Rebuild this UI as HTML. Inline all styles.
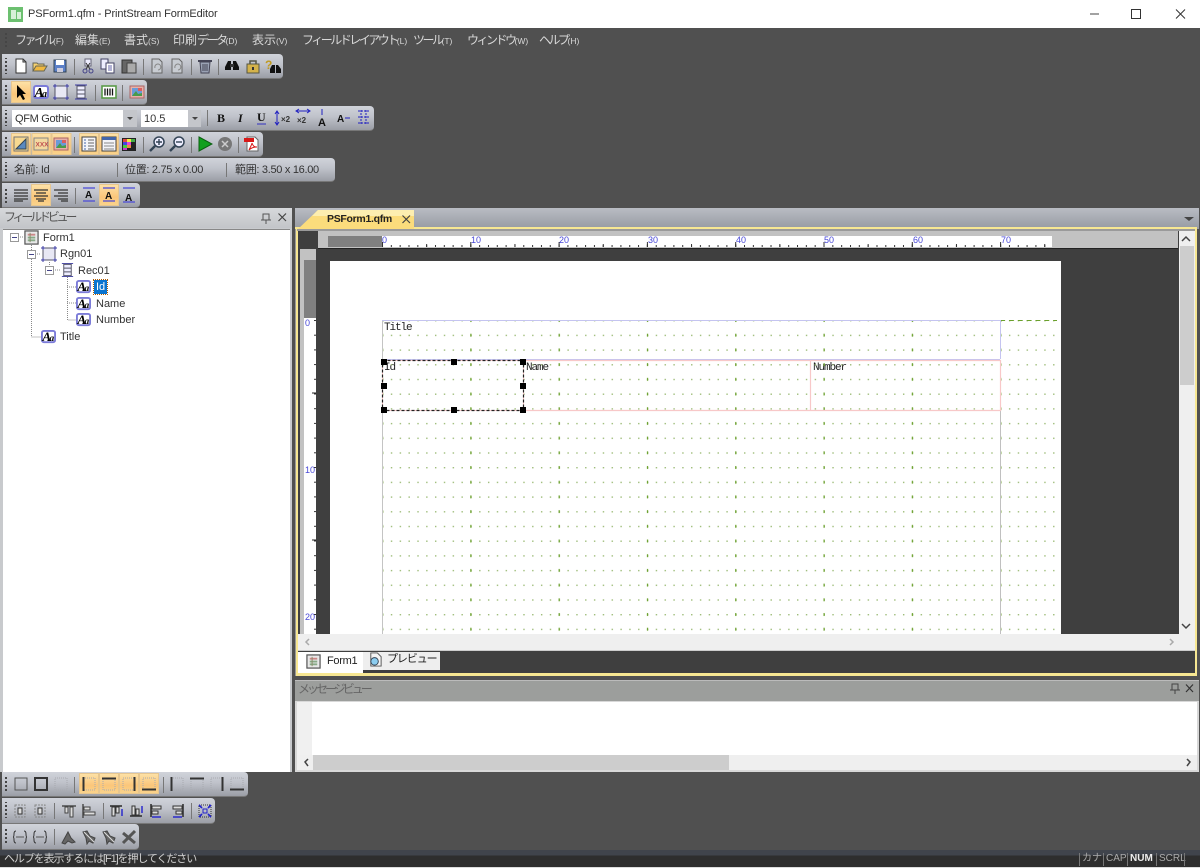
<!DOCTYPE html>
<html><head><meta charset="utf-8"><title>PrintStream FormEditor</title>
<style>
html,body{margin:0;padding:0;background:#4f4f4f}
#r{position:relative;width:1200px;height:868px;overflow:hidden;background:#505050;font:11px "Liberation Sans","Noto Sans CJK JP",sans-serif;color:#222;filter:blur(.3px)}
#r div{position:absolute;white-space:nowrap}
.tb{left:2px;background:linear-gradient(#d0d3da 0,#bfc2ca 45%,#9b9ea6 100%);border-radius:0 4px 4px 0;border-bottom:1px solid #777}
.m{top:33px;font-size:12px;color:#d9d9d9;line-height:15px}
.m small{font-size:8.5px}
.m b{font-weight:normal;letter-spacing:-2.5px}
.tr{font-size:11px;color:#333;line-height:14px}
.mono{font-family:"Liberation Mono","Noto Sans CJK JP",monospace;font-size:11px;letter-spacing:-1.1px;color:#222;line-height:12px}
.s5{font-size:11px;line-height:15px;color:#333;letter-spacing:-.3px;top:163px}
svg{position:absolute;left:0;top:0}
.st{top:852px;font-size:10px;line-height:14px;color:#aaa}
.rn{font-size:9px;line-height:11px;color:#4848d8}
</style></head><body><div id="r">
<!-- title bar -->
<div style="left:0;top:0;width:1200px;height:28px;background:#fff"></div>
<div style="left:28px;top:7px;font-size:11px;line-height:15px;color:#333;letter-spacing:-.1px">PSForm1.qfm - PrintStream FormEditor</div>
<!-- menu -->
<div class="m" style="left:15px"><b>ファイル</b><small>(F)</small></div>
<div class="m" style="left:75px">編集<small>(E)</small></div>
<div class="m" style="left:124px">書式<small>(S)</small></div>
<div class="m" style="left:173px">印刷<b>データ</b><small>(D)</small></div>
<div class="m" style="left:252px">表示<small>(V)</small></div>
<div class="m" style="left:302px"><b>フィールドレイアウト</b><small>(L)</small></div>
<div class="m" style="left:413px"><b>ツール</b><small>(T)</small></div>
<div class="m" style="left:467px"><b>ウィンドウ</b><small>(W)</small></div>
<div class="m" style="left:539px"><b>ヘルプ</b><small>(H)</small></div>
<!-- toolbars -->
<div class="tb" style="top:54px;width:281px;height:24px"></div>
<div class="tb" style="top:80px;width:145px;height:24px"></div>
<div class="tb" style="top:106px;width:372px;height:24px"></div>
<div class="tb" style="top:132px;width:261px;height:24px"></div>
<div class="tb" style="top:158px;width:333px;height:23px"></div>
<div class="tb" style="top:183px;width:138px;height:24px"></div>
<div class="tb" style="top:772px;width:246px;height:24px"></div>
<div class="tb" style="top:798px;width:213px;height:25px"></div>
<div class="tb" style="top:824px;width:137px;height:25px"></div>
<!-- combos -->
<div style="left:12px;top:110px;width:125px;height:17px;background:#fff"></div>
<div style="left:123px;top:110px;width:14px;height:17px;background:#c4c6cb"></div>
<div style="left:15px;top:112px;font-size:11px;line-height:14px;color:#333;letter-spacing:-.3px">QFM Gothic</div>
<div style="left:141px;top:110px;width:60px;height:17px;background:#fff"></div>
<div style="left:188px;top:110px;width:13px;height:17px;background:#c4c6cb"></div>
<div style="left:144px;top:112px;font-size:11px;line-height:14px;color:#333">10.5</div>
<!-- status tb text -->
<div class="s5" style="left:14px">名前: Id</div>
<div class="s5" style="left:125px">位置: 2.75 x 0.00</div>
<div class="s5" style="left:235px">範囲: 3.50 x 16.00</div>
<!-- field view -->
<div style="left:0;top:208px;width:292px;height:564px;background:#c8cacd"></div>
<div style="left:0;top:208px;width:292px;height:20px;background:linear-gradient(#d6d8db,#c2c4c8)"></div>
<div style="left:4px;top:210px;font-size:12px;line-height:15px;color:#555;letter-spacing:-3.2px">フィールドビュー</div>
<div style="left:3px;top:229px;width:287px;height:542px;background:#fff;border-top:1px solid #888"></div>
<div class="tr" style="left:43px;top:231px">Form1</div>
<div class="tr" style="left:60px;top:247px">Rgn01</div>
<div class="tr" style="left:78px;top:264px">Rec01</div>
<div style="left:94px;top:280px;width:13px;height:14px;background:#0a74d0;outline:1px dotted #b05a00"></div>
<div class="tr" style="left:96px;top:280px;color:#fff">Id</div>
<div class="tr" style="left:96px;top:297px">Name</div>
<div class="tr" style="left:96px;top:313px">Number</div>
<div class="tr" style="left:60px;top:330px">Title</div>
<!-- document area -->
<div style="left:295px;top:208px;width:904px;height:21px;background:linear-gradient(#b9bcc3,#969aa2)"></div>
<div style="left:295px;top:227px;width:902px;height:449px;background:#f7e792"></div>
<div style="left:295px;top:229px;width:1px;height:447px;background:#999"></div>
<div style="left:297px;top:229px;width:898px;height:2px;background:#9a9a9a"></div>
<div style="left:298px;top:231px;width:897px;height:403px;background:#3f3f3f"></div>
<div style="left:318px;top:231px;width:860px;height:17px;background:#c2c2c2"></div>
<div style="left:328px;top:236px;width:54px;height:11px;background:#808080"></div>
<div style="left:382px;top:236px;width:670px;height:11px;background:#fff"></div>
<div style="left:300px;top:249px;width:16px;height:385px;background:#c2c2c2"></div>
<div style="left:304px;top:260px;width:12px;height:58px;background:#808080"></div>
<div style="left:304px;top:318px;width:12px;height:316px;background:#fff"></div>
<div style="left:1179px;top:231px;width:16px;height:403px;background:#efefef"></div>
<div style="left:1180px;top:246px;width:14px;height:139px;background:#cdcdcd"></div>
<div style="left:330px;top:261px;width:731px;height:373px;background:#fff"></div>
<div style="left:298px;top:634px;width:897px;height:17px;background:#efefef;border-bottom:1px solid #ccc;box-sizing:border-box"></div>
<div style="left:298px;top:651px;width:897px;height:22px;background:#3f3f3f"></div>
<div style="left:298px;top:652px;width:65px;height:21px;background:#fff"></div>
<div style="left:363px;top:652px;width:77px;height:18px;background:#eee"></div>
<div style="left:327px;top:654px;font-size:11px;line-height:14px;color:#222;letter-spacing:-.3px">Form1</div>
<div style="left:387px;top:652px;font-size:11px;line-height:14px;color:#222;letter-spacing:-1.1px">プレビュー</div>
<!-- tab -->
<svg width="1200" height="868" viewBox="0 0 1200 868"><path d="M298 229L318 210H414V229Z" fill="#fbdc7c"/><path d="M318 210H414V216H312Z" fill="#fdeeb0"/></svg>
<div style="left:327px;top:212px;font-size:10.5px;font-weight:bold;line-height:14px;color:#222;letter-spacing:-.3px">PSForm1.qfm</div>
<!-- ruler numbers -->
<div class="rn" style="left:382px;top:235px">0</div>
<div class="rn" style="left:471px;top:235px">10</div>
<div class="rn" style="left:559px;top:235px">20</div>
<div class="rn" style="left:648px;top:235px">30</div>
<div class="rn" style="left:736px;top:235px">40</div>
<div class="rn" style="left:824px;top:235px">50</div>
<div class="rn" style="left:913px;top:235px">60</div>
<div class="rn" style="left:1001px;top:235px">70</div>
<div class="rn" style="left:305px;top:318px">0</div>
<div class="rn" style="left:305px;top:465px">10</div>
<div class="rn" style="left:305px;top:612px">20</div>
<!-- message view -->
<div style="left:295px;top:700px;width:904px;height:72px;background:#d8d8d8"></div>
<div style="left:295px;top:680px;width:904px;height:21px;background:#9c9e9c;border-top:1px solid #bbb;box-sizing:border-box"></div>
<div style="left:298px;top:682px;font-size:12px;line-height:15px;color:#666;letter-spacing:-3px">メッセージビュー</div>
<div style="left:297px;top:702px;width:900px;height:53px;background:#fff"></div>
<div style="left:297px;top:702px;width:15px;height:53px;background:#f0f0f0"></div>
<div style="left:297px;top:755px;width:900px;height:15px;background:#efefef"></div>
<div style="left:313px;top:755px;width:416px;height:15px;background:#cdcdcd"></div>
<!-- status bar -->
<div style="left:0;top:850px;width:1200px;height:17px;background:linear-gradient(#40444c 0,#40444c 5px,#2e2e2e 6px)"></div>
<div style="left:0;top:867px;width:1200px;height:1px;background:#ddd"></div>
<div style="left:4px;top:852px;font-size:11px;line-height:14px;color:#d0d0d0;letter-spacing:-1.1px">ヘルプを表示するには[F1]を押してください</div>
<div class="st" style="left:1082px">カナ</div>
<div class="st" style="left:1106px">CAP</div>
<div class="st" style="left:1130px;color:#eee;font-weight:bold">NUM</div>
<div class="st" style="left:1159px">SCRL</div>
<!-- page overlay text -->
<div class="mono" style="left:384px;top:322px">Title</div>
<div class="mono" style="left:384px;top:362px">Id</div>
<div class="mono" style="left:526px;top:362px">Name</div>
<div class="mono" style="left:813px;top:362px">Number</div>

<svg width="1200" height="868" viewBox="0 0 1200 868" fill="none">
<defs>
<linearGradient id="hl" x1="0" y1="0" x2="0" y2="1"><stop offset="0" stop-color="#fde2a8"/><stop offset=".6" stop-color="#fbc67a"/><stop offset="1" stop-color="#fad48c"/></linearGradient>
<pattern id="grip" x="0" y="0" width="4" height="4" patternUnits="userSpaceOnUse"><rect x="1" y="1" width="2" height="2" fill="#444"/></pattern>
<pattern id="dots" x="382" y="320" width="8.83" height="14.7" patternUnits="userSpaceOnUse"><rect x="0" y="0" width="1.4" height="1.4" fill="#9dbc78"/></pattern>
<pattern id="tick" x="382" y="240" width="8.83" height="9" patternUnits="userSpaceOnUse"><rect x="0" y="5" width="1" height="2" fill="#333"/></pattern>
<pattern id="tick10" x="382" y="240" width="88.3" height="9" patternUnits="userSpaceOnUse"><rect x="0" y="2" width="1" height="5" fill="#333"/></pattern>
<pattern id="tick5" x="382" y="240" width="44.15" height="9" patternUnits="userSpaceOnUse"><rect x="0" y="4" width="1" height="3" fill="#333"/></pattern>
<pattern id="vtick" x="310" y="320" width="9" height="14.7" patternUnits="userSpaceOnUse"><rect x="4" y="0" width="2" height="1" fill="#333"/></pattern>
<pattern id="maj" x="382" y="320" width="88.3" height="14.7" patternUnits="userSpaceOnUse"><rect x="0" y="0" width="1.2" height="2" fill="#6aa02c"/><rect x="0" y="13.700" width="1.2" height="1" fill="#6aa02c"/></pattern>
<pattern id="hd" x="382" y="0" width="8.83" height="10" patternUnits="userSpaceOnUse"><rect x="0" y="0" width="5" height="1" fill="#6aa02c"/></pattern>

<symbol id="new" viewBox="0 0 16 16"><path d="M3 1H10L13 4V15H3Z" fill="#fff" stroke="#333"/><path d="M10 1V4H13" stroke="#333"/></symbol>
<symbol id="open" viewBox="0 0 16 16"><path d="M1 13V5H5L6 6H12V8" fill="#f4d070" stroke="#665"/><path d="M1 13L4 8H15L12 13Z" fill="#f0b840" stroke="#665"/></symbol>
<symbol id="save" viewBox="0 0 16 16"><rect x="2" y="2" width="12" height="12" fill="#5a7fc8" stroke="#345"/><rect x="4" y="2" width="8" height="5" fill="#fff"/><rect x="5" y="10" width="6" height="4" fill="#ccd"/></symbol>
<symbol id="cut" viewBox="0 0 16 16"><path d="M5 1H11V8H5Z" fill="#eef" stroke="#667"/><circle cx="5" cy="13" r="2" stroke="#448"/><circle cx="11" cy="13" r="2" stroke="#448"/><path d="M6 11L10 5M10 11L6 5" stroke="#333"/></symbol>
<symbol id="copy" viewBox="0 0 16 16"><path d="M1 1H8V11H1Z" fill="#eef" stroke="#446"/><path d="M6 5H14V15H6Z" fill="#fff" stroke="#446"/><path d="M8 8H12M8 10H12M8 12H12" stroke="#66a"/></symbol>
<symbol id="paste" viewBox="0 0 16 16"><rect x="1" y="2" width="10" height="13" fill="#666" stroke="#333"/><rect x="6" y="5" width="9" height="10" fill="#aaa" stroke="#444"/></symbol>
<symbol id="undo" viewBox="0 0 16 16"><path d="M3 1H10L13 4V15H3Z" fill="#c8ccd2" stroke="#666"/><path d="M6 10A3 3 0 1 1 9 12" stroke="#888"/></symbol>
<symbol id="trash" viewBox="0 0 16 16"><path d="M1 3H15" stroke="#445" stroke-width="2"/><path d="M3 4L4 15H12L13 4Z" fill="#9aa2b4" stroke="#445"/><path d="M6 6V13M8 6V13M10 6V13" stroke="#445"/></symbol>
<symbol id="bino" viewBox="0 0 16 16"><path d="M4 3H7V12H1V9ZM9 3H12L15 9V12H9Z" fill="#111"/><rect x="6" y="6" width="4" height="3" fill="#333"/></symbol>
<symbol id="lock" viewBox="0 0 16 16"><rect x="2" y="6" width="12" height="9" fill="#d4b24a" stroke="#554"/><path d="M5 6V3H11V6" stroke="#554" stroke-width="1.5"/><rect x="7" y="9" width="2" height="3" fill="#333"/></symbol>
<symbol id="find" viewBox="0 0 16 16"><text x="0" y="11" font-size="12" font-weight="bold" fill="#c09a20" font-family="Liberation Sans">?</text><path d="M7 7H10V15H5V11ZM11 7H13L16 11V15H11Z" fill="#111"/></symbol>
<symbol id="arrow" viewBox="0 0 16 16"><path d="M4 1V14L7 11L10 16L12 15L9.5 10H13Z" fill="#000"/></symbol>
<symbol id="aa" viewBox="0 0 16 16"><rect x="1" y="2" width="14" height="12" rx="2" fill="#fff" stroke="#7b7bd8" stroke-width="2"/><text x="1.500" y="13" font-size="14" font-style="italic" font-weight="bold" fill="#000" font-family="Liberation Serif">A</text><text x="9" y="13" font-size="10" font-style="italic" font-weight="bold" fill="#000" font-family="Liberation Serif">a</text></symbol>
<symbol id="rgn" viewBox="0 0 16 16"><rect x="2" y="2" width="12" height="12" fill="#e8e8f4" stroke="#556"/><path d="M0 2H4M12 2H16M0 14H4M12 14H16M2 0V4M14 0V4M2 12V16M14 12V16" stroke="#3a3aa0"/></symbol>
<symbol id="rec" viewBox="0 0 16 16"><path d="M2 1H14M2 15H14" stroke="#3a3aa0"/><rect x="4" y="2" width="8" height="12" fill="#eef" stroke="#556"/><path d="M4 6H12M4 10H12" stroke="#556"/></symbol>
<symbol id="bar" viewBox="0 0 16 16"><rect x="1" y="2" width="14" height="12" fill="#fff" stroke="#5a9a4a" stroke-width="1.6"/><path d="M4 4.500V11.500M6.500 4.500V11.500M9 4.500V11.500M11.500 4.500V11.500" stroke="#111" stroke-width="1.3"/></symbol>
<symbol id="xxx" viewBox="0 0 16 16"><rect x="1" y="2" width="14" height="12" fill="#f2d8a0" stroke="#888"/><text x="2.500" y="10.500" font-size="6.500" font-weight="bold" fill="#c05050" font-family="Liberation Sans">XXX</text></symbol>
<symbol id="pic" viewBox="0 0 16 16"><rect x="1" y="2" width="14" height="12" fill="#e8b0a8" stroke="#a66"/><rect x="3" y="4" width="10" height="8" fill="#6a9ad8"/><path d="M3 12L7 7L9 10L13 9V12Z" fill="#4a9a4a"/><rect x="9" y="4" width="4" height="3" fill="#d86060"/></symbol>
<symbol id="ch" viewBox="0 0 16 16"><rect x="1" y="1" width="14" height="14" fill="#f6d890" stroke="#777"/><path d="M3 13L13 3V13Z" fill="#5a8ac0" stroke="#345"/></symbol>
<symbol id="form" viewBox="0 0 16 16"><rect x="1" y="1" width="14" height="14" fill="#f4f4f8" stroke="#444"/><path d="M3 4H5M3 7H5M3 10H5M3 13H5" stroke="#46a"/><path d="M7 4H13M7 7H13M7 10H13M7 13H13" stroke="#666"/></symbol>
<symbol id="form2" viewBox="0 0 16 16"><rect x="1" y="1" width="14" height="14" fill="#f4f4f8" stroke="#444"/><rect x="1" y="1" width="14" height="3" fill="#46a"/><path d="M3 7H13M3 10H13M3 13H13" stroke="#888"/></symbol>
<symbol id="colors" viewBox="0 0 16 16"><rect x="1" y="2" width="14" height="13" fill="#222"/><rect x="2" y="3" width="4" height="3" fill="#d44"/><rect x="6" y="3" width="4" height="3" fill="#ee4"/><rect x="10" y="3" width="4" height="3" fill="#4a4"/><rect x="2" y="6" width="4" height="3" fill="#44d"/><rect x="6" y="6" width="4" height="3" fill="#d4d"/><rect x="2" y="9" width="4" height="3" fill="#4c4"/><rect x="6" y="9" width="4" height="3" fill="#e84"/><rect x="2" y="12" width="4" height="2" fill="#c3c"/></symbol>
<symbol id="zi" viewBox="0 0 16 16"><circle cx="10" cy="6" r="5" fill="#eef" stroke="#345" stroke-width="1.5"/><path d="M7 6H13M10 3V9" stroke="#345" stroke-width="1.4"/><path d="M6 10L1 15" stroke="#345" stroke-width="2.4"/></symbol>
<symbol id="zo" viewBox="0 0 16 16"><circle cx="10" cy="6" r="5" fill="#eef" stroke="#345" stroke-width="1.5"/><path d="M7 6H13" stroke="#345" stroke-width="1.4"/><path d="M6 10L1 15" stroke="#345" stroke-width="2.4"/></symbol>
<symbol id="play" viewBox="0 0 16 16"><path d="M2 1L15 8L2 15Z" fill="#12a01e" stroke="#0a6010"/></symbol>
<symbol id="stop" viewBox="0 0 16 16"><circle cx="8" cy="8" r="7" fill="#777"/><path d="M5 5L11 11M11 5L5 11" stroke="#ccc" stroke-width="1.5"/></symbol>
<symbol id="pdf" viewBox="0 0 16 16"><path d="M3 1H11L14 4V15H3Z" fill="#fff" stroke="#666"/><rect x="0" y="2" width="10" height="4" fill="#d81818"/><path d="M5 14C7 10 8 8 8 7C9 10 10 11 13 11C10 11 7 12 5 14Z" stroke="#d81818"/></symbol>
<symbol id="al" viewBox="0 0 16 16"><path d="M1 3H15M1 6H15M1 9H15M1 12H15M1 14H10" stroke="#333" stroke-width="1.2"/></symbol>
<symbol id="ac" viewBox="0 0 16 16"><path d="M1 3H15M3 6H13M1 9H15M3 12H13M5 14H11" stroke="#333" stroke-width="1.2"/></symbol>
<symbol id="ar" viewBox="0 0 16 16"><path d="M1 3H15M5 6H15M1 9H15M5 12H15M8 14H15" stroke="#333" stroke-width="1.2"/></symbol>
<symbol id="atop" viewBox="0 0 16 16"><path d="M2 1H14M2 14H14" stroke="#4a4ad8" stroke-width="1.3"/><text x="4" y="11" font-size="10" font-weight="bold" fill="#111" font-family="Liberation Sans">A</text></symbol>
<symbol id="amid" viewBox="0 0 16 16"><path d="M2 1H14M2 14H14" stroke="#4a4ad8" stroke-width="1.3"/><text x="4" y="12" font-size="10" font-weight="bold" fill="#111" font-family="Liberation Sans">A</text></symbol>
<symbol id="abot" viewBox="0 0 16 16"><path d="M2 1H14M2 15H14" stroke="#4a4ad8" stroke-width="1.3"/><text x="4" y="14" font-size="10" font-weight="bold" fill="#111" font-family="Liberation Sans">A</text></symbol>
<symbol id="fa" viewBox="0 0 16 16"><rect x="1" y="1" width="14" height="14" fill="#e8e8e8" stroke="#555" stroke-width="1.3"/><path d="M4 5H12" stroke="#c88" stroke-width="2"/><path d="M4 8H12M4 11H12" stroke="#8a8" stroke-width="2"/><path d="M6.500 3V13" stroke="#886"/></symbol>
<symbol id="prev" viewBox="0 0 16 16"><path d="M3 1H10L14 5V15H3Z" fill="#f4f4f4" stroke="#555"/><circle cx="7" cy="10" r="4" fill="#8ccdf0" stroke="#345"/></symbol>
<symbol id="bd" viewBox="0 0 16 16"><rect x="2" y="2" width="12" height="12" stroke="#555" stroke-width="1"/></symbol>
<symbol id="bd2" viewBox="0 0 16 16"><rect x="2" y="2" width="12" height="12" stroke="#333" stroke-width="2"/></symbol>
<symbol id="bd0" viewBox="0 0 16 16"><rect x="2" y="2" width="12" height="12" stroke="#a8aab0" stroke-dasharray="1 1"/></symbol>
<symbol id="bl" viewBox="0 0 16 16"><rect x="2" y="2" width="12" height="12" stroke="#a8aab0" stroke-dasharray="1 1"/><path d="M2.500 1V15" stroke="#333" stroke-width="2"/></symbol>
<symbol id="bt" viewBox="0 0 16 16"><rect x="2" y="2" width="12" height="12" stroke="#a8aab0" stroke-dasharray="1 1"/><path d="M1 2.500H15" stroke="#333" stroke-width="2"/></symbol>
<symbol id="br" viewBox="0 0 16 16"><rect x="2" y="2" width="12" height="12" stroke="#a8aab0" stroke-dasharray="1 1"/><path d="M13.500 1V15" stroke="#333" stroke-width="2"/></symbol>
<symbol id="bb" viewBox="0 0 16 16"><rect x="2" y="2" width="12" height="12" stroke="#a8aab0" stroke-dasharray="1 1"/><path d="M1 13.500H15" stroke="#333" stroke-width="2"/></symbol>
<symbol id="g1" viewBox="0 0 16 16"><rect x="3" y="2" width="10" height="12" stroke="#888" stroke-dasharray="2 1"/><rect x="6" y="5" width="4" height="6" fill="#ddd" stroke="#333"/></symbol>
<symbol id="g2" viewBox="0 0 16 16"><path d="M1 3H15" stroke="#444" stroke-width="1.4"/><rect x="4" y="4" width="3" height="6" fill="#ddd" stroke="#444"/><rect x="9" y="4" width="3" height="10" fill="#ddd" stroke="#444"/></symbol>
<symbol id="g3" viewBox="0 0 16 16"><path d="M2 1V15" stroke="#444" stroke-width="1.4"/><rect x="3" y="4" width="6" height="3" fill="#ddd" stroke="#444"/><rect x="3" y="9" width="11" height="3" fill="#ddd" stroke="#444"/></symbol>
<symbol id="g4" viewBox="0 0 16 16"><path d="M1 3H13" stroke="#333" stroke-width="1.6"/><rect x="3" y="4" width="3" height="9" fill="#ddd" stroke="#333"/><rect x="7" y="4" width="3" height="6" fill="#ddd" stroke="#333"/><path d="M13 13V6" stroke="#22c" stroke-width="1.4"/></symbol>
<symbol id="g5" viewBox="0 0 16 16"><path d="M1 13H13" stroke="#333" stroke-width="1.6"/><rect x="3" y="3" width="3" height="9" fill="#ddd" stroke="#333"/><rect x="7" y="6" width="3" height="6" fill="#ddd" stroke="#333"/><path d="M13 3V10" stroke="#22c" stroke-width="1.4"/></symbol>
<symbol id="g6" viewBox="0 0 16 16"><path d="M2 1V14" stroke="#333" stroke-width="1.6"/><rect x="3" y="3" width="9" height="3" fill="#ddd" stroke="#333"/><rect x="3" y="8" width="6" height="3" fill="#ddd" stroke="#333"/><path d="M3 14H12" stroke="#22c" stroke-width="1.4"/></symbol>
<symbol id="g7" viewBox="0 0 16 16"><path d="M14 1V14" stroke="#333" stroke-width="1.6"/><rect x="4" y="3" width="9" height="3" fill="#ddd" stroke="#333"/><rect x="7" y="8" width="6" height="3" fill="#ddd" stroke="#333"/><path d="M4 14H13" stroke="#22c" stroke-width="1.4"/></symbol>
<symbol id="g8" viewBox="0 0 16 16"><rect x="2" y="2" width="12" height="12" stroke="#333" stroke-dasharray="1 1"/><rect x="6" y="6" width="4" height="4" stroke="#22c"/><path d="M2 2L5 5M14 2L11 5M2 14L5 11M14 14L11 11" stroke="#22c" stroke-width="1.6"/></symbol>
<symbol id="h1" viewBox="0 0 16 16"><path d="M4 2Q2 2 2 5T1 8Q2 8 2 11T4 14M12 2Q14 2 14 5T15 8Q14 8 14 11T12 14" stroke="#333"/><path d="M4 8H12" stroke="#555"/></symbol>
<symbol id="k1" viewBox="0 0 16 16"><path d="M1 14L7 3L10 9L14 13L11 14L7 12L4 15Z" fill="#666" stroke="#444"/></symbol>
<symbol id="k2" viewBox="0 0 16 16"><path d="M2 3L6 2L9 7L14 9L12 14L8 12L6 15L5 9Z" fill="#666" stroke="#444"/><path d="M3 3L13 13" stroke="#ddd"/></symbol>
<symbol id="k3" viewBox="0 0 16 16"><path d="M2 4L14 14M14 2L2 14" stroke="#555" stroke-width="3"/></symbol>
</defs>

<!-- window controls -->
<path d="M1090 14H1099" stroke="#444"/><rect x="1131.500" y="9.500" width="9" height="9" stroke="#333"/><path d="M1176 9.500L1185 18.500M1185 9.500L1176 18.500" stroke="#333"/>
<!-- app icon -->
<rect x="8" y="7" width="15" height="15" fill="#6cc070"/><rect x="11" y="10" width="5" height="9" fill="#d8f0d8"/><rect x="17" y="12" width="4" height="7" fill="#d8f0d8"/>
<!-- grips -->
<rect x="4" y="32" width="4" height="17" fill="url(#grip)" opacity=".9"/>
<rect x="4" y="58" width="4" height="16" fill="url(#grip)"/><rect x="4" y="84" width="4" height="16" fill="url(#grip)"/><rect x="4" y="110" width="4" height="16" fill="url(#grip)"/><rect x="4" y="136" width="4" height="16" fill="url(#grip)"/><rect x="4" y="162" width="4" height="16" fill="url(#grip)"/><rect x="4" y="187" width="4" height="16" fill="url(#grip)"/><rect x="4" y="776" width="4" height="16" fill="url(#grip)"/><rect x="4" y="802" width="4" height="16" fill="url(#grip)"/><rect x="4" y="828" width="4" height="16" fill="url(#grip)"/>
<!-- separators -->
<g stroke="#777"><path d="M74.500 59V75M143.500 59V75M191.500 59V75M218.500 59V75M95.500 85V101M122.500 85V101M207.500 110V126M74.500 137V153M143.500 137V153M191.500 137V153M238.500 137V153M117.500 163V177M226.500 163V177M75.500 188V204M74.500 777V793M163.500 777V793M54.500 803V819M103.500 803V819M191.500 803V819M54.500 829V845"/></g>
<!-- highlights -->
<g fill="url(#hl)" stroke="#e6c690">
<rect x="11.500" y="81.500" width="19" height="21"/>
<rect x="11.500" y="133.500" width="19" height="21"/><rect x="32" y="133.500" width="19" height="21"/><rect x="52" y="133.500" width="19" height="21"/>
<rect x="79.500" y="133.500" width="19" height="21"/><rect x="99.500" y="133.500" width="19" height="21"/>
<rect x="31.500" y="184.500" width="19" height="21"/><rect x="99.500" y="184.500" width="19" height="21"/>
<rect x="79.500" y="773.500" width="19" height="20"/><rect x="99.500" y="773.500" width="19" height="20"/><rect x="119.500" y="773.500" width="19" height="20"/><rect x="139.500" y="773.500" width="19" height="20"/>
</g>
<!-- combo arrows -->
<path d="M127 117H133L130 120ZM192 117H198L195 120Z" fill="#444"/>
<!-- tb1 -->
<use href="#new" x="13" y="58" width="16" height="16"/><use href="#open" x="32" y="58" width="16" height="16"/><use href="#save" x="52" y="58" width="16" height="16"/><use href="#cut" x="80" y="58" width="16" height="16"/><use href="#copy" x="100" y="58" width="16" height="16"/><use href="#paste" x="121" y="58" width="16" height="16"/><use href="#undo" x="149" y="58" width="16" height="16"/><use href="#undo" x="169" y="58" width="16" height="16"/><use href="#trash" x="197" y="58" width="16" height="16"/><use href="#bino" x="224" y="58" width="16" height="16"/><use href="#lock" x="245" y="58" width="16" height="16"/><use href="#find" x="265" y="58" width="16" height="16"/>
<!-- tb2 -->
<use href="#arrow" x="13" y="84" width="16" height="16"/><use href="#aa" x="33" y="84" width="16" height="16"/><use href="#rgn" x="53" y="84" width="16" height="16"/><use href="#rec" x="73" y="84" width="16" height="16"/><use href="#bar" x="101" y="84" width="16" height="16"/><use href="#pic" x="129" y="84" width="16" height="16"/>
<!-- tb3 -->
<g font-family="Liberation Serif" font-weight="bold" fill="#111"><text x="217" y="122" font-size="12">B</text><text x="238" y="122" font-size="12" font-style="italic">I</text><text x="257" y="121" font-size="12">U</text></g><path d="M257 124H266" stroke="#3030c0"/>
<path d="M277 112V124M275 114L277 111L279 114M275 122L277 125L279 122" stroke="#2020c0"/><text x="281" y="122" font-size="8" font-weight="bold" fill="#333" font-family="Liberation Sans">×2</text>
<path d="M297 111H309M299 109L296 111L299 113M307 109L310 111L307 113" stroke="#2020c0"/><text x="297" y="123" font-size="8" font-weight="bold" fill="#333" font-family="Liberation Sans">×2</text>
<path d="M322 109V115" stroke="#2020c0"/><text x="318" y="126" font-size="11" font-weight="bold" fill="#111" font-family="Liberation Sans">A</text>
<text x="337" y="122" font-size="10" font-weight="bold" fill="#111" font-family="Liberation Sans">A</text><path d="M345 118H350" stroke="#2020c0"/>
<path d="M358 111H369M358 117H369M358 123H369M361 110V124M366 110V124" stroke="#2020c0" stroke-dasharray="2 1"/>
<!-- tb4 -->
<use href="#ch" x="13" y="136" width="16" height="16"/><use href="#xxx" x="33" y="136" width="16" height="16"/><use href="#pic" x="53" y="136" width="16" height="16"/><use href="#form" x="81" y="136" width="16" height="16"/><use href="#form2" x="101" y="136" width="16" height="16"/><use href="#colors" x="121" y="136" width="16" height="16"/><use href="#zi" x="149" y="136" width="16" height="16"/><use href="#zo" x="169" y="136" width="16" height="16"/><use href="#play" x="197" y="136" width="16" height="16"/><use href="#stop" x="217" y="136" width="16" height="16"/><use href="#pdf" x="244" y="136" width="16" height="16"/>
<!-- tb6 -->
<use href="#al" x="13" y="187" width="16" height="16"/><use href="#ac" x="33" y="187" width="16" height="16"/><use href="#ar" x="53" y="187" width="16" height="16"/><use href="#atop" x="81" y="187" width="16" height="16"/><use href="#amid" x="101" y="187" width="16" height="16"/><use href="#abot" x="121" y="187" width="16" height="16"/>
<!-- bottom tb1 -->
<use href="#bd" x="13" y="776" width="16" height="16"/><use href="#bd2" x="33" y="776" width="16" height="16"/><use href="#bd0" x="53" y="776" width="16" height="16"/>
<use href="#bl" x="81" y="776" width="16" height="16"/><use href="#bt" x="101" y="776" width="16" height="16"/><use href="#br" x="121" y="776" width="16" height="16"/><use href="#bb" x="141" y="776" width="16" height="16"/>
<use href="#bl" x="169" y="776" width="16" height="16"/><use href="#bt" x="189" y="776" width="16" height="16"/><use href="#br" x="209" y="776" width="16" height="16"/><use href="#bb" x="229" y="776" width="16" height="16"/>
<!-- bottom tb2 -->
<use href="#g1" x="12" y="803" width="16" height="16"/><use href="#g1" x="32" y="803" width="16" height="16"/><use href="#g2" x="61" y="803" width="16" height="16"/><use href="#g3" x="81" y="803" width="16" height="16"/><use href="#g4" x="109" y="803" width="16" height="16"/><use href="#g5" x="129" y="803" width="16" height="16"/><use href="#g6" x="149" y="803" width="16" height="16"/><use href="#g7" x="169" y="803" width="16" height="16"/><use href="#g8" x="197" y="803" width="16" height="16"/>
<!-- bottom tb3 -->
<use href="#h1" x="12" y="829" width="16" height="16"/><use href="#h1" x="32" y="829" width="16" height="16"/><use href="#k1" x="61" y="829" width="16" height="16"/><use href="#k2" x="81" y="829" width="16" height="16"/><use href="#k2" x="101" y="829" width="16" height="16"/><use href="#k3" x="121" y="829" width="16" height="16"/>
<!-- panel pin/close -->
<path d="M263 214H269V220H263ZM266 220V224M261 220H271" stroke="#555"/><path d="M278.500 213.500L286 221M286 213.500L278.500 221" stroke="#444" stroke-width="1.2"/>
<path d="M1172 684H1178V690H1172ZM1175 690V694M1170 690H1180" stroke="#444"/><path d="M1186 684.500L1193 692M1193 684.500L1186 692" stroke="#333" stroke-width="1.2"/>
<!-- tab close + dropdown -->
<path d="M402.500 215.500L410 223M410 215.500L402.500 223" stroke="#444" stroke-width="1.2"/>
<path d="M1184 217H1194L1189 221Z" fill="#444"/>
<!-- tree -->
<g stroke="#888" stroke-dasharray="1 1"><path d="M18 237H24M31.500 245V337H41M35 254H41M49.500 262V271M53 270H60M67.500 277V320H76M67 287H76M67 303H76"/></g>
<g fill="#fff" stroke="#999"><rect x="10.500" y="233.500" width="8" height="8"/><rect x="27.500" y="250.500" width="8" height="8"/><rect x="45.500" y="266.500" width="8" height="8"/></g>
<path d="M12 237.500H17M29 254.500H34M47 270.500H52" stroke="#448"/>
<use href="#fa" x="24" y="230" width="15" height="15"/><use href="#rgn" x="41" y="246" width="16" height="16"/><use href="#rec" x="60" y="262" width="15" height="16"/>
<use href="#aa" x="76" y="279" width="15" height="15"/><use href="#aa" x="76" y="296" width="15" height="15"/><use href="#aa" x="76" y="312" width="15" height="15"/><use href="#aa" x="41" y="329" width="15" height="15"/>
<!-- rulers -->
<rect x="382" y="240" width="670" height="9" fill="url(#tick)"/><rect x="382" y="240" width="670" height="9" fill="url(#tick5)"/><rect x="382" y="240" width="670" height="9" fill="url(#tick10)"/>
<path d="M318 248.500H1178" stroke="#222"/>
<rect x="310" y="320" width="6" height="314" fill="url(#vtick)"/>
<path d="M312 393H316M312 540H316" stroke="#222"/>
<path d="M1182 241L1186 237L1190 241M1182 624L1186 628L1190 624" stroke="#444" stroke-width="1.5"/>
<path d="M309 639L306 642L309 645" stroke="#aaa" stroke-width="1.5"/><path d="M1170 639L1173 642L1170 645" stroke="#aaa" stroke-width="1.5"/>
<path d="M308 759L305 762L308 766" stroke="#444" stroke-width="1.5"/><path d="M1187 759L1190 762L1187 766" stroke="#444" stroke-width="1.5"/>
<use href="#fa" x="306" y="654" width="15" height="15"/><use href="#prev" x="368" y="652" width="15" height="15"/>
<!-- grid -->
<rect x="382" y="321" width="675" height="313" fill="url(#dots)"/>
<rect x="382" y="321" width="675" height="313" fill="url(#maj)"/>
<rect x="382" y="467" width="675" height="1" fill="url(#hd)"/>
<rect x="382" y="614" width="675" height="1" fill="url(#hd)"/>
<rect x="1000" y="320" width="57" height="1" fill="url(#hd)"/>
<path d="M382.500 320V634" stroke="#c4c4c4"/><path d="M1000.500 410V634" stroke="#c0c0c0"/>
<path d="M382 320.500H1000.500V359" stroke="#c4c4f0"/><path d="M382 359.500H1000" stroke="#c4c4f0"/>
<path d="M524 360.500H1000.500V410.500H524M810.500 360V410" stroke="#f8c8c8" stroke-width="1.2"/>
<rect x="382.500" y="360.500" width="141" height="50" stroke="#f8c8c8"/><rect x="382.500" y="360.500" width="141" height="50" stroke="#222" stroke-width="1.2" stroke-dasharray="3 2"/>
<g fill="#000"><rect x="381" y="359" width="6" height="6"/><rect x="451" y="359" width="6" height="6"/><rect x="520" y="359" width="6" height="6"/><rect x="381" y="383" width="6" height="6"/><rect x="520" y="383" width="6" height="6"/><rect x="381" y="407" width="6" height="6"/><rect x="451" y="407" width="6" height="6"/><rect x="520" y="407" width="6" height="6"/></g>
<!-- status separators -->
<path d="M1079.500 853V866M1103.500 853V866M1127.500 853V866M1156.500 853V866M1184.500 853V866" stroke="#777"/>
</svg>
</div></body></html>
